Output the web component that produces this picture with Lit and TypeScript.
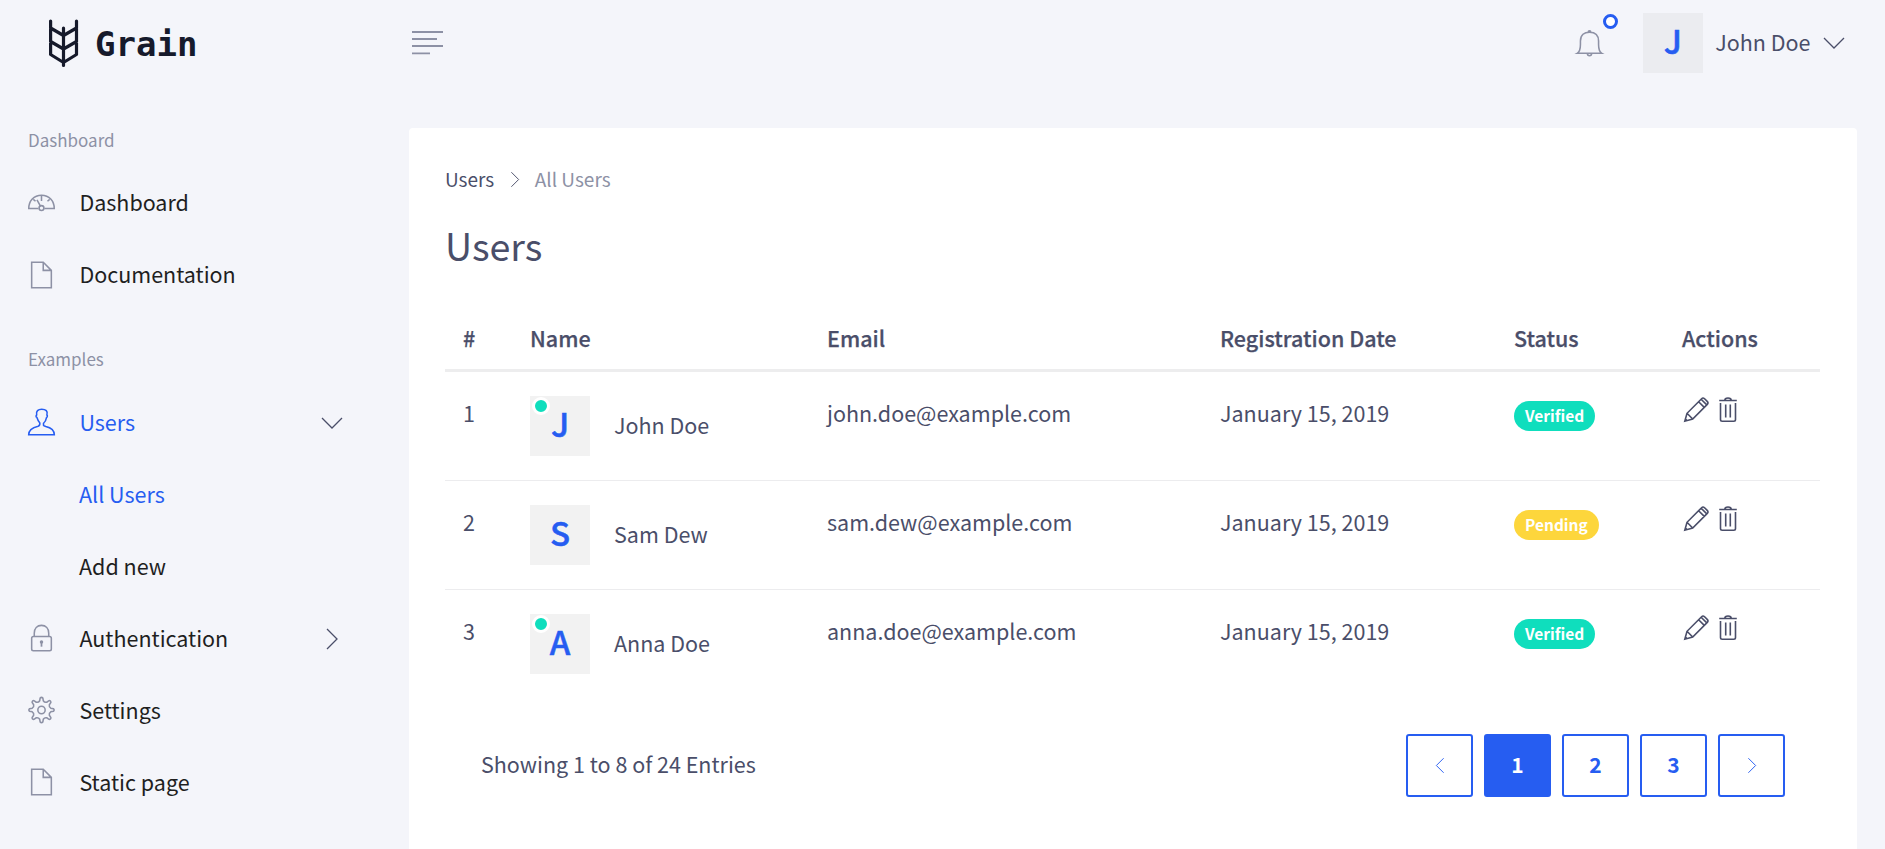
import { LitElement, html, svg, css } from "lit";
import { customElement } from "lit/decorators.js";
import { classMap } from "lit/directives/class-map.js";

const gearPath = (() => {
  const at = (radius: number, degrees: number) => {
    const a = (degrees * Math.PI) / 180;
    return `${(14 + radius * Math.sin(a)).toFixed(2)} ${(14 - radius * Math.cos(a)).toFixed(2)}`;
  };
  let d = "";
  for (let i = 0; i < 8; i++) {
    const a = i * 45;
    d += `${i ? "L" : "M"}${at(9.8, a - 11)}L${at(12.4, a - 6.5)}Q${at(13.9, a)} ${at(12.4, a + 6.5)}L${at(9.8, a + 11)}Q${at(8.2, a + 22.5)} ${at(9.8, a + 34)}`;
  }
  return d + "Z";
})();

const shapes: Record<string, unknown> = {
  gauge: svg`<path d="M10.8 19.6H.8C.8 12 6 5.9 14 5.9S27.200 12 27.200 19.600H17"/><circle cx="14" cy="19.200" r="2.500"/><path d="M12.800 17 9.300 10.800M14 6v5.800M5.500 10.200l2.300 2M22.500 10.200l-2.300 2"/>`,
  file: svg`<path d="M3.800.8H15.800L24.200 9.200V27.200H3.800ZM15.800.8V9.200H24.200"/>`,
  user: svg`<path d="M.7 27.300C.7 21.500 6 19.300 10.500 18.300 12.300 17.800 12.400 17 12.300 15 10.300 13 9.600 10.500 9.200 9.200 8 8.800 8.200 7.500 9 6.600 8.100 2.500 10.500.8 14.200.8 18.500.8 20.800 2.500 19.600 6.600 20.500 7.600 20 8.900 19.200 9.400 18.700 12 17.700 14 16.100 15.300V17.500C16.500 18.100 17.500 18.300 18.400 18.600 22.500 19.500 27.300 21.800 27.300 27.300Z"/>`,
  lock: svg`<rect x="3.800" y="12.500" width="20.400" height="14.700" rx="1.800"/><path d="M6.500 12.500V9C6.500 4 9.500.9 14 .9S21.500 4 21.500 9V12.500"/><path d="M14 18v5" stroke-width="1.800"/><circle cx="14" cy="18.200" r="1" fill="currentColor"/>`,
  gear: svg`<path d=${gearPath}/><circle cx="14" cy="14" r="3.800"/>`,
  bell: svg`<path d="M1.200 24.700C4 23 4.600 20 4.600 15.500V12C4.600 5.500 8.500 2.800 14 2.800S23.400 5.500 23.400 12V15.500C23.400 20 24 23 26.800 24.700ZM12.700 2.500C12.700.8 15.300.8 15.300 2.500M11.800 25C11.800 28 16.200 28 16.200 25"/>`,
};

const icon = (name: string) =>
  html`<svg class="icon" viewBox="0 0 28 28">${shapes[name]}</svg>`;

const chevron = (cls: string) =>
  html`<svg class="chevron ${cls}" viewBox="0 0 22 12"><path d="M1 1 11 11 21 1" /></svg>`;

const pencil = html`<svg class="action" viewBox="0 0 25 25">
  <path d="M.8 24.200 3 16.300 17.600 1.700Q19 .3 20.600 1.800L23.200 4.400Q24.700 6 23.300 7.400L8.700 22ZM3 16.300 8.700 22M14.600 4.700 20.300 10.400M17.100 2.200 22.800 7.900M1.500 22 3 23.500" />
</svg>`;

const trash = html`<svg class="action trash" viewBox="0 0 18 25">
  <path d="M.2 3.500H17.800M5.800 3.300Q5.800 1 9 1T12.200 3.300M1.500 6V22.500Q1.500 24.200 3.200 24.200H14.800Q16.500 24.200 16.500 22.500V6M6.700 7.500V20.500M11.300 7.500V20.500" />
</svg>`;

interface NavItem {
  label: string;
  icon?: string;
  active?: boolean;
  arrow?: string;
}

const mainNav: NavItem[] = [
  { label: "Dashboard", icon: "gauge" },
  { label: "Documentation", icon: "file" },
];

const exampleNav: NavItem[] = [
  { label: "Users", icon: "user", active: true, arrow: "down" },
  { label: "All Users", active: true },
  { label: "Add new" },
  { label: "Authentication", icon: "lock", arrow: "right" },
  { label: "Settings", icon: "gear" },
  { label: "Static page", icon: "file" },
];

const users = [
  { name: "John Doe", email: "john.doe@example.com", online: true, status: "Verified" },
  { name: "Sam Dew", email: "sam.dew@example.com", online: false, status: "Pending" },
  { name: "Anna Doe", email: "anna.doe@example.com", online: true, status: "Verified" },
];

@customElement("app-root")
export class AppRoot extends LitElement {
  static styles = css`
    :host {
      display: block;
      height: 849px;
      overflow: hidden;
      background: #f4f5fa;
      color: #4a4e69;
      font: 400 21.5px/30px "Noto Sans CJK SC", "Noto Sans", sans-serif;
    }
    * { box-sizing: border-box; }
    svg {
      display: block;
      flex: none;
      overflow: visible;
      fill: none;
      stroke: currentColor;
      stroke-width: 1.6;
    }
    .header {
      display: flex;
      height: 86px;
      padding: 0 40px 0 47px;
      align-items: center;
    }
    .logo { width: 32px; height: 50px; stroke: #161a2b; stroke-width: 3.2; stroke-linecap: round; stroke-linejoin: round; }
    .brand {
      width: 331px;
      padding: 2px 0 0 16px;
      color: #161a2b;
      font: 700 34px/40px "DejaVu Sans Mono", monospace;
    }
    .burger { width: 34px; height: 26px; color: #8d91a5; stroke-width: 1.8; }
    .tools { display: flex; margin-left: auto; align-items: center; }
    .bell { position: relative; margin-right: 40px; color: #8d91a5; }
    .dot {
      position: absolute;
      top: -15px;
      right: -15px;
      width: 15px;
      height: 15px;
      border: 3px solid #265df1;
      border-radius: 50%;
      background: #fff;
    }
    .icon { width: 27px; height: 28px; }
    .account { padding: 0 12.5px 2px 12.5px; }
    .avatar {
      position: relative;
      width: 60px;
      height: 60px;
      flex: none;
      background: rgba(0, 0, 0, 0.05);
      color: #265df1;
      font-size: 33px;
      font-weight: 500;
      line-height: 55px;
      text-align: center;
      -webkit-text-stroke: 0.5px #265df1;
    }
    .avatar.top { background: #ebecf0; }
    .online {
      position: absolute;
      top: 1px;
      left: 2px;
      width: 18px;
      height: 18px;
      border: 3px solid #fff;
      border-radius: 50%;
      background: #0fdebd;
    }
    .chevron { width: 22px; height: 12px; stroke-width: 1.3; }
    .chevron.right { transform: rotate(-90deg); }
    .chevron.left { transform: rotate(90deg); }
    .chevron.small { width: 16px; height: 9px; stroke-width: 1.3; }
    .body { display: flex; padding-top: 42px; }
    .side { width: 409px; padding: 0 54px 0 28px; }
    .label { height: 40px; margin-top: -1px; color: #8d91a5; font-size: 17px; line-height: 25px; }
    .label.second { margin: 35px 0 0; }
    .item { display: flex; height: 72px; align-items: center; color: #1f1f1f; }
    .item svg { color: #8d91a5; }
    .item .text { flex: 1; padding: 0 0 2px 51px; }
    .item .icon + .text { padding-left: 24.4px; }
    .label.second ~ .item .text { padding-bottom: 1px; }
    .item.active { color: #265df1; }
    .item.active .icon { color: #265df1; }
    .item .chevron { margin: 2px 12px 0 0; color: #4a4e69; }
    .card {
      width: 1448px;
      height: 721px;
      padding: 36px 37px 0 36px;
      border-radius: 4px 4px 0 0;
      background: #fff;
    }
    .crumbs { display: flex; height: 30px; align-items: center; font-size: 19px; }
    .crumbs .chevron { margin: 0 11.5px 0 13px; }
    .crumbs .muted { color: #8d91a5; }
    .title { margin: 25px 0 0; padding-top: 1px; font-size: 37.6px; font-weight: 400; line-height: 49px; }
    .row {
      display: grid;
      grid-template-columns: 67px 297px 393px 294px 168px 1fr;
      height: 109px;
      padding-top: 24px;
      border-top: 1px solid #ececee;
    }
    .row > div { padding-left: 18px; }
    .row.head {
      height: 103px;
      padding-top: 54px;
      border-top: 0;
      border-bottom: 3px solid #ededee;
      font-weight: 500;
      -webkit-text-stroke: 0.25px #4a4e69;
    }
    .row.first { height: 108px; border-top: 0; }
    .cell { padding-top: 2px; }
    .person { display: flex; height: 60px; align-items: center; }
    .person .name { padding: 0 0 3px 24px; }
    .badge {
      display: inline-block;
      height: 30px;
      margin-top: 5px;
      padding: 0 11px;
      border-radius: 15px;
      background: #0fdebd;
      color: #fff;
      font-size: 15.5px;
      font-weight: 700;
      line-height: 29px;
    }
    .badge.pending { background: #fdd63c; }
    .actions { display: flex; padding-top: 1px; }
    .action { width: 25px; height: 25px; margin-left: 2px; }
    .trash { width: 18px; margin-left: 10px; }
    .foot { display: flex; margin-top: 36px; padding: 0 35px 0 36px; height: 63px; align-items: center; }
    .entries { padding-bottom: 3px; }
    .pages { display: flex; gap: 11px; margin-left: auto; }
    .page {
      display: flex;
      width: 67px;
      height: 63px;
      padding-bottom: 3px;
      align-items: center;
      justify-content: center;
      border: 2px solid #265df1;
      border-radius: 3px;
      color: #265df1;
      font-size: 21px;
      font-weight: 700;
    }
    .page .chevron { margin-top: 2px; }
    .page.current { background: #265df1; color: #fff; }
  `;

  private nav(items: NavItem[]) {
    return items.map(
      (i) => html`<div class=${classMap({ item: true, active: !!i.active })}>
        ${i.icon ? icon(i.icon) : ""}<span class="text">${i.label}</span>${i.arrow ? chevron(i.arrow) : ""}
      </div>`
    );
  }

  render() {
    return html`
      <header class="header">
        <svg class="logo" viewBox="0 0 32 50">
          <path d="M3.600 3V36.500L16.500 44.500 29.500 36.500V3M16.500 10V47.500M3.600 10 16.500 17.500 29.500 10M3.600 23.500 16.500 31 29.500 23.500" />
        </svg>
        <div class="brand">Grain</div>
        <svg class="burger" viewBox="0 0 34 26"><path d="M2 2H33M2 9H27M2 16H33M2 23.300H20" /></svg>
        <div class="tools">
          <div class="bell">${icon("bell")}<span class="dot"></span></div>
          <div class="avatar top">J</div>
          <span class="account">John Doe</span>
          ${chevron("down")}
        </div>
      </header>
      <div class="body">
        <nav class="side">
          <div class="label">Dashboard</div>
          ${this.nav(mainNav)}
          <div class="label second">Examples</div>
          ${this.nav(exampleNav)}
        </nav>
        <main class="card">
          <div class="crumbs"><span>Users</span>${chevron("right small")}<span class="muted">All Users</span></div>
          <h1 class="title">Users</h1>
          <div class="row head">
            ${["#", "Name", "Email", "Registration Date", "Status", "Actions"].map((t) => html`<div>${t}</div>`)}
          </div>
          ${users.map(
            (u, i) => html`<div class=${classMap({ row: true, first: i === 0 })}>
              <div class="cell">${i + 1}</div>
              <div class="person">
                <div class="avatar">${u.name[0]}${u.online ? html`<span class="online"></span>` : ""}</div>
                <span class="name">${u.name}</span>
              </div>
              <div class="cell">${u.email}</div>
              <div class="cell">January 15, 2019</div>
              <div><span class=${classMap({ badge: true, pending: u.status === "Pending" })}>${u.status}</span></div>
              <div class="actions">${pencil}${trash}</div>
            </div>`
          )}
          <div class="foot">
            <span class="entries">Showing 1 to 8 of 24 Entries</span>
            <div class="pages">
              <span class="page">${chevron("left small")}</span>
              <span class="page current">1</span>
              <span class="page">2</span>
              <span class="page">3</span>
              <span class="page">${chevron("right small")}</span>
            </div>
          </div>
        </main>
      </div>
    `;
  }
}
